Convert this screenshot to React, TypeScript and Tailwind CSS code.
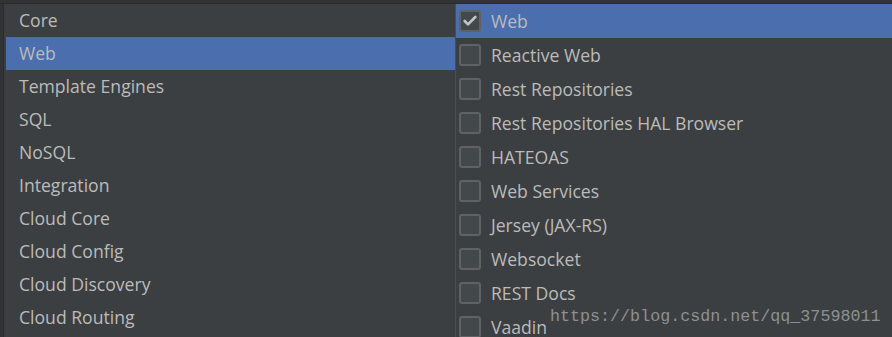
import { Check } from 'lucide-react';

const groups = [
  'Core',
  'Web',
  'Template Engines',
  'SQL',
  'NoSQL',
  'Integration',
  'Cloud Core',
  'Cloud Config',
  'Cloud Discovery',
  'Cloud Routing',
];

const deps = [
  'Web',
  'Reactive Web',
  'Rest Repositories',
  'Rest Repositories HAL Browser',
  'HATEOAS',
  'Web Services',
  'Jersey (JAX-RS)',
  'Websocket',
  'REST Docs',
  'Vaadin',
];

export default function App() {
  return (
    <div
      className="w-[892px] h-[337px] overflow-hidden bg-[#313335] flex flex-col text-[#bbbbbb]"
      style={{ fontFamily: '"Open Sans", "Noto Sans", sans-serif' }}
    >
      <div className="h-[4px] shrink-0 border-b border-[#2b2b2b]" />
      <div className="flex flex-1 min-h-0">
        <div className="w-[4px] shrink-0 border-r border-[#2b2b2b]" />
        {/* groups */}
        <div className="w-[452px] shrink-0 bg-[#3c3f41] pl-[2px] border-r border-[#4a4d4f]">
          {groups.map((g, i) => (
            <div
              key={g}
              className={`h-[33px] flex items-center pl-[13px] text-[17.6px] ${
                i === 1 ? 'bg-[#4b6eaf]' : ''
              }`}
            >
              {g}
            </div>
          ))}
        </div>
        {/* dependencies */}
        <div className="flex-1 bg-[#3c3f41] relative">
          {deps.map((d, i) => (
            <div
              key={d}
              className={`h-[34px] flex items-center pl-[3px] text-[17.6px] ${
                i === 0 ? 'bg-[#4b6eaf]' : ''
              }`}
            >
              <div className="w-[22px] h-[22px] rounded-[3px] border-2 border-[#5e6265] bg-[#43494a] flex items-center justify-center">
                {i === 0 && <Check className="w-[16px] h-[16px] text-[#c0c5ca]" strokeWidth={4} />}
              </div>
              <span className="ml-[10px]">{d}</span>
            </div>
          ))}
          <div
            className="absolute left-[94px] top-[305px] text-[16.7px] text-[#8d9092] leading-none"
            style={{ fontFamily: '"Liberation Mono", monospace' }}
          >
            https://blog.csdn.net/qq_37598011
          </div>
        </div>
      </div>
    </div>
  );
}
